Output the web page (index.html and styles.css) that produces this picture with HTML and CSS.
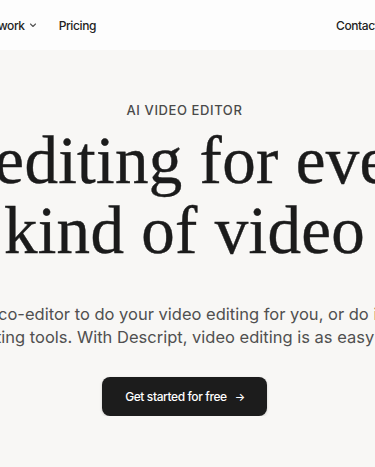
FILE: index.html
```html
<!DOCTYPE html>
<html lang="en">
<head>
    <meta charset="UTF-8">
    <meta name="viewport" content="width=device-width, initial-scale=1.0">
    <title>Descript — AI video editor</title>
    <link rel="stylesheet" href="styles.css">
</head>
<body>
    <header class="topbar">
        <nav class="nav-left">
            <a class="nav-link" href="#">Product <span class="chev">⌄</span></a>
            <a class="nav-link" href="#">How it work <span class="chev"><svg width="8" height="8" viewBox="0 0 8 8"><path d="M1.5 3 L4 5.5 L6.5 3" fill="none" stroke="#555" stroke-width="1.1" stroke-linecap="round" stroke-linejoin="round"/></svg></span></a>
            <a class="nav-link" href="#">Pricing</a>
        </nav>
        <nav class="nav-right">
            <a class="nav-link" href="#">Contact sales</a>
            <a class="nav-link" href="#">Log in</a>
        </nav>
    </header>

    <main class="hero">
        <p class="eyebrow">AI VIDEO EDITOR</p>
        <h1 class="title">
            <span class="line">AI editing for every&nbsp;</span>
            <span class="line">kind of video</span>
        </h1>
        <p class="lead">
            <span class="line">Now use an AI co-editor to do your video editing for you, or do it yourself with</span>
            <span class="line">editing tools. With Descript, video editing is as easy as</span>
        </p>
        <a class="cta" href="#">Get started for free <span class="arrow">→</span></a>
    </main>
</body>
</html>
```

FILE: styles.css
```css
body {
    margin: 0;
    background-color: #f8f7f5;
    font-family: Inter, "Noto Sans", sans-serif;
    color: #1b1b1b;
    overflow: hidden;
}
a {
    color: inherit;
    text-decoration: none;
}
.topbar {
    display: flex;
    justify-content: space-between;
    align-items: center;
    height: 50px;
    background-color: #fdfdfd;
    overflow: hidden;
}
.nav-left {
    display: flex;
    justify-content: flex-end;
    gap: 22px;
    width: 96px;
    flex-shrink: 0;
}
.nav-right {
    display: flex;
    gap: 24px;
    width: 39px;
    flex-shrink: 0;
}
.nav-link {
    font-size: 12px;
    font-weight: 500;
    letter-spacing: -0.4px;
    color: #222;
    white-space: nowrap;
    display: flex;
    align-items: center;
    gap: 4px;
}
.chev svg {
    display: block;
}
.hero {
    display: flex;
    flex-direction: column;
    align-items: center;
    padding: 0 6px 0 0;
}
.eyebrow {
    margin: 52px 0 0;
    font-size: 13px;
    font-weight: 500;
    letter-spacing: 0.6px;
    color: #4a4a4a;
    white-space: nowrap;
}
.title {
    margin: 7px 0 0;
    font-family: "Liberation Serif", serif;
    font-weight: 400;
    font-size: 67px;
    line-height: 70px;
    letter-spacing: 0.3px;
    color: #1b1b1b;
    -webkit-text-stroke: 0.4px #1b1b1b;
    display: flex;
    flex-direction: column;
    align-items: center;
}
.line {
    display: block;
    white-space: nowrap;
}
.lead {
    margin: 38px 0 0;
    font-size: 16.5px;
    line-height: 23px;
    color: #505050;
    display: flex;
    flex-direction: column;
    align-items: center;
}
.cta {
    margin-top: 28px;
    display: flex;
    align-items: center;
    gap: 8px;
    height: 39px;
    padding: 0 22px 0 23px;
    border-radius: 8px;
    background-color: #1c1c1c;
    color: #fff;
    font-size: 12px;
    font-weight: 500;
    letter-spacing: -0.4px;
    box-shadow: 0 1px 3px rgba(0, 0, 0, 0.18);
}
.arrow {
    font-size: 11px;
}
```
